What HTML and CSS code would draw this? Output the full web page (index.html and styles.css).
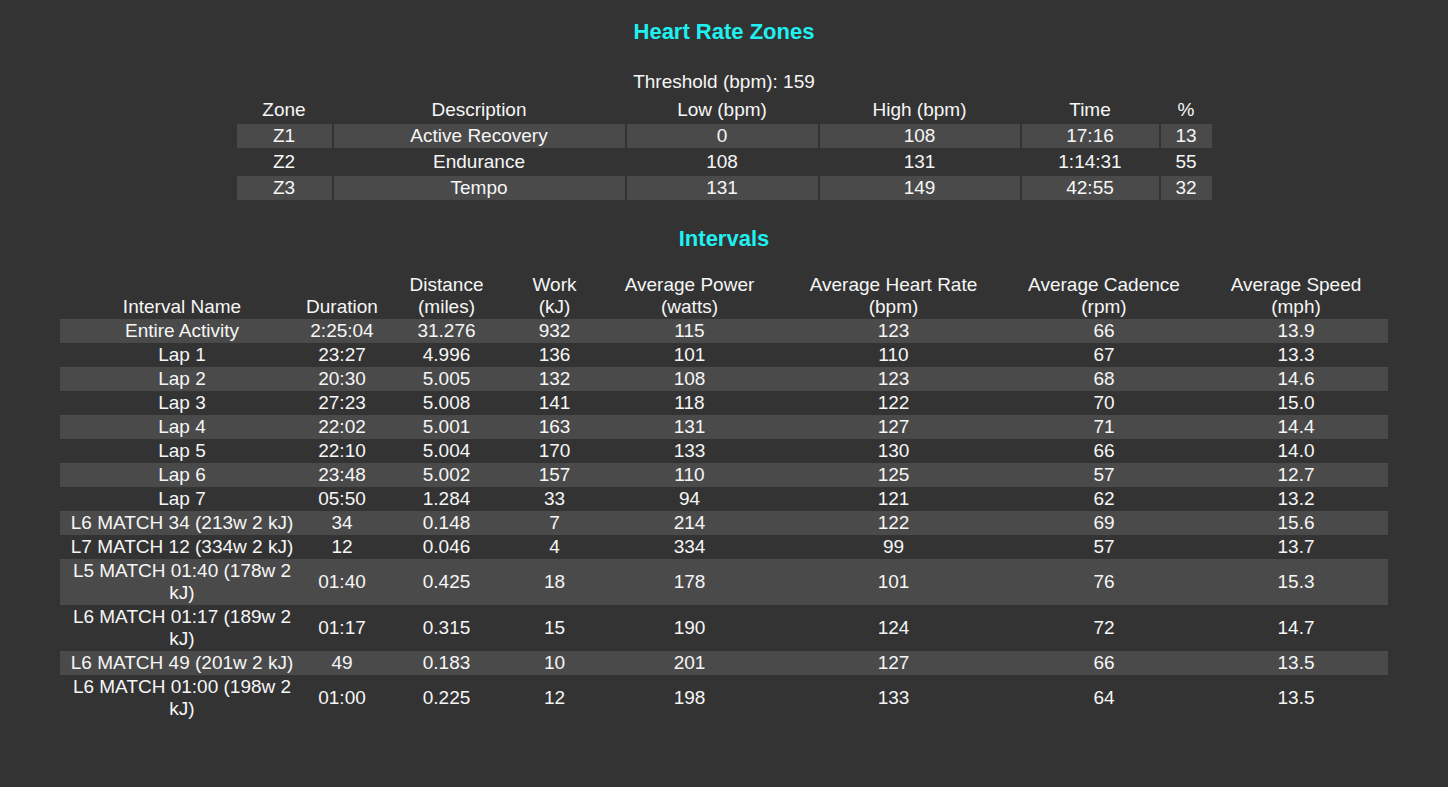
FILE: index.html
```html
<!DOCTYPE html>
<html lang="en">
<head>
<meta charset="utf-8">
<title>Heart Rate Zones and Intervals</title>
<link rel="stylesheet" href="styles.css">
</head>
<body>
<main class="page">
  <h2 class="section-title title-zones">Heart Rate Zones</h2>
  <div class="threshold">Threshold (bpm): 159</div>
  <table class="zones">
    <colgroup>
      <col class="z-zone"><col class="z-desc"><col class="z-low"><col class="z-high"><col class="z-time"><col class="z-pct">
    </colgroup>
    <thead>
      <tr><th>Zone</th><th>Description</th><th>Low (bpm)</th><th>High (bpm)</th><th>Time</th><th>%</th></tr>
    </thead>
    <tbody>
      <tr class="stripe"><td>Z1</td><td>Active Recovery</td><td>0</td><td>108</td><td>17:16</td><td>13</td></tr>
      <tr><td>Z2</td><td>Endurance</td><td>108</td><td>131</td><td>1:14:31</td><td>55</td></tr>
      <tr class="stripe"><td>Z3</td><td>Tempo</td><td>131</td><td>149</td><td>42:55</td><td>32</td></tr>
    </tbody>
  </table>

  <h2 class="section-title title-intervals">Intervals</h2>
  <table class="intervals">
    <colgroup>
      <col class="i-name"><col class="i-dur"><col class="i-dist"><col class="i-work"><col class="i-pow"><col class="i-hr"><col class="i-cad"><col class="i-spd">
    </colgroup>
    <thead>
      <tr>
        <th>Interval Name</th><th>Duration</th><th>Distance<br>(miles)</th><th>Work<br>(kJ)</th><th>Average Power<br>(watts)</th><th>Average Heart Rate<br>(bpm)</th><th>Average Cadence<br>(rpm)</th><th>Average Speed<br>(mph)</th>
      </tr>
    </thead>
    <tbody>
      <tr class="stripe"><td>Entire Activity</td><td>2:25:04</td><td>31.276</td><td>932</td><td>115</td><td>123</td><td>66</td><td>13.9</td></tr>
      <tr><td>Lap 1</td><td>23:27</td><td>4.996</td><td>136</td><td>101</td><td>110</td><td>67</td><td>13.3</td></tr>
      <tr class="stripe"><td>Lap 2</td><td>20:30</td><td>5.005</td><td>132</td><td>108</td><td>123</td><td>68</td><td>14.6</td></tr>
      <tr><td>Lap 3</td><td>27:23</td><td>5.008</td><td>141</td><td>118</td><td>122</td><td>70</td><td>15.0</td></tr>
      <tr class="stripe"><td>Lap 4</td><td>22:02</td><td>5.001</td><td>163</td><td>131</td><td>127</td><td>71</td><td>14.4</td></tr>
      <tr><td>Lap 5</td><td>22:10</td><td>5.004</td><td>170</td><td>133</td><td>130</td><td>66</td><td>14.0</td></tr>
      <tr class="stripe"><td>Lap 6</td><td>23:48</td><td>5.002</td><td>157</td><td>110</td><td>125</td><td>57</td><td>12.7</td></tr>
      <tr><td>Lap 7</td><td>05:50</td><td>1.284</td><td>33</td><td>94</td><td>121</td><td>62</td><td>13.2</td></tr>
      <tr class="stripe"><td>L6 MATCH 34 (213w 2 kJ)</td><td>34</td><td>0.148</td><td>7</td><td>214</td><td>122</td><td>69</td><td>15.6</td></tr>
      <tr><td>L7 MATCH 12 (334w 2 kJ)</td><td>12</td><td>0.046</td><td>4</td><td>334</td><td>99</td><td>57</td><td>13.7</td></tr>
      <tr class="stripe"><td>L5 MATCH 01:40 (178w 2 kJ)</td><td>01:40</td><td>0.425</td><td>18</td><td>178</td><td>101</td><td>76</td><td>15.3</td></tr>
      <tr><td>L6 MATCH 01:17 (189w 2 kJ)</td><td>01:17</td><td>0.315</td><td>15</td><td>190</td><td>124</td><td>72</td><td>14.7</td></tr>
      <tr class="stripe"><td>L6 MATCH 49 (201w 2 kJ)</td><td>49</td><td>0.183</td><td>10</td><td>201</td><td>127</td><td>66</td><td>13.5</td></tr>
      <tr><td>L6 MATCH 01:00 (198w 2 kJ)</td><td>01:00</td><td>0.225</td><td>12</td><td>198</td><td>133</td><td>64</td><td>13.5</td></tr>
    </tbody>
  </table>
</main>
</body>
</html>
```

FILE: styles.css
```css
html, body {
  margin: 0;
  padding: 0;
  background: #333333;
}

body {
  color: #f6f6f6;
  font-family: "Liberation Sans", Arial, sans-serif;
  font-size: 19px;
  line-height: 22px;
}

.page {
  display: flex;
  flex-direction: column;
  align-items: center;
  padding-top: 17px;
  padding-bottom: 40px;
}

.section-title {
  margin: 0;
  color: #1ff0f0;
  font-size: 22px;
  line-height: 29px;
  font-weight: bold;
}

.title-intervals {
  margin-top: 22px;
}

.threshold {
  margin-top: 25px;
  margin-bottom: 3px;
  text-align: center;
}

table {
  table-layout: fixed;
  text-align: center;
}

th, td {
  padding: 1px;
  font-weight: normal;
  vertical-align: middle;
  overflow: hidden;
}

th {
  vertical-align: bottom;
}

.stripe td {
  background: #4a4a4a;
}

/* Zones table */
.zones {
  border-collapse: separate;
  border-spacing: 2px;
  width: 979px;
}

.z-zone { width: 95px; }
.z-desc { width: 291px; }
.z-low  { width: 191px; }
.z-high { width: 200px; }
.z-time { width: 137px; }
.z-pct  { width: 51px; }

/* Intervals table */
.intervals {
  margin-top: 20px;
  border-collapse: separate;
  border-spacing: 0;
  width: 1328px;
}

.i-name { width: 244px; }
.i-dur  { width: 76px; }
.i-dist { width: 133px; }
.i-work { width: 83px; }
.i-pow  { width: 187px; }
.i-hr   { width: 221px; }
.i-cad  { width: 200px; }
.i-spd  { width: 184px; }
```
